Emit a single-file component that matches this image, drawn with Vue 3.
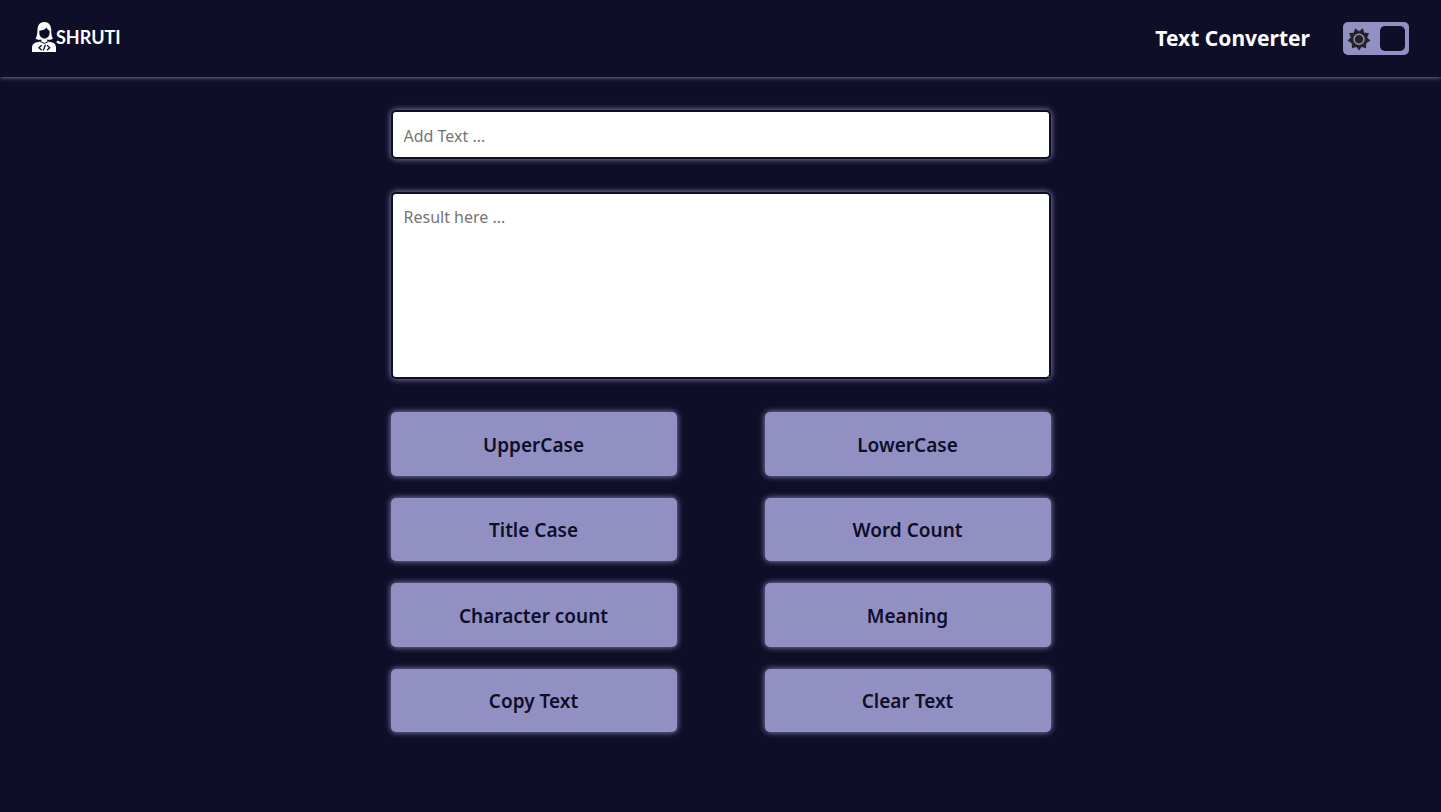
<script setup>
import { ref } from 'vue'

const source = ref('')
const result = ref('')
const dark = ref(true)

const countWords = (text) => text.split(/\s+/).filter(Boolean).length
const titleCase = (text) =>
  text.toLowerCase().replace(/(^|\s)\S/g, (letter) => letter.toUpperCase())

const actions = [
  { label: 'UpperCase', run: () => (result.value = source.value.toUpperCase()) },
  { label: 'LowerCase', run: () => (result.value = source.value.toLowerCase()) },
  { label: 'Title Case', run: () => (result.value = titleCase(source.value)) },
  { label: 'Word Count', run: () => (result.value = String(countWords(source.value))) },
  { label: 'Character count', run: () => (result.value = String(source.value.length)) },
  { label: 'Meaning', run: () => (result.value = source.value) },
  { label: 'Copy Text', run: () => navigator.clipboard?.writeText(result.value) },
  { label: 'Clear Text', run: () => { source.value = ''; result.value = '' } }
]
</script>

<template>
  <div class="page">
    <header class="bar">
      <a class="logo" href="#">
        <svg class="avatar" viewBox="0 0 24 30" aria-hidden="true">
          <path fill="#fff" fill-rule="evenodd" d="M12.300 0C8 0 5.700 3 5.500 7.500C5.300 11.500 5.200 14 3.600 16.600C4.800 17.700 7 18.100 9.500 17.600V19.200L4 20.600C1 21.500 0 23.300 0 26V30H24V26C24 23.300 23 21.500 20.500 20.600L15.200 19.200V17.600C17.700 18.100 19.700 17.700 20.900 16.600C19.400 14 19.300 11.500 19.200 7.500C19 3 16.700 0 12.300 0ZM7.300 8.700C10.800 8.600 13.200 7.400 14.400 5.600C15.200 7.200 16.300 8.300 17.600 8.800V10.800C17.600 14.200 15.300 16.600 12.500 16.600C9.600 16.600 7.300 14.200 7.300 10.800Z" />
          <path fill="none" stroke="#0e0e28" stroke-width="1" d="M8.300 19.600L12.300 21.400L16.300 19.600" />
          <path fill="none" stroke="#0e0e28" stroke-width="1.300" d="M9.700 23.200L7 25.700L9.700 28.200M15 23.200L17.700 25.700L15 28.200M13.400 22.800L11.300 28.600" />
        </svg>
        <span class="brand">SHRUTI</span>
      </a>
      <h1 class="title">Text Converter</h1>
      <label class="switch">
        <input v-model="dark" type="checkbox" role="switch" aria-label="Dark mode" />
        <svg class="sun" viewBox="0 0 24 24" aria-hidden="true">
          <path fill="#252326" d="M12 4.200L15.900 1.200L17.200 5.800L22 6L20.200 10.600L23.400 13.400L19.300 16.300L19 21.200L14.600 20L12 23.500L9.400 20L5 21.200L4.700 16.300L.6 13.400L3.800 10.600L2 6L6.800 5.800L8.100 1.200Z" />
          <circle cx="12" cy="12.200" r="5" fill="#252326" stroke="#9290c3" stroke-width="1.400" />
        </svg>
        <span class="knob"></span>
      </label>
    </header>

    <main class="converter">
      <input v-model="source" class="field" type="text" placeholder="Add Text ..." aria-label="Text" />
      <textarea v-model="result" class="field result" placeholder="Result here ..." aria-label="Result"></textarea>
      <div class="actions">
        <button v-for="action in actions" :key="action.label" type="button" @click="action.run">
          {{ action.label }}
        </button>
      </div>
    </main>
  </div>
</template>

<style>
body {
  margin: 0;
  background: #0e0e28;
}
</style>

<style scoped>
.page {
  min-height: 100vh;
  background: #0e0e28;
  font-family: "Noto Sans", "Open Sans", sans-serif;
}

.bar {
  display: flex;
  align-items: center;
  box-sizing: border-box;
  height: 77px;
  padding: 0 32px;
  box-shadow: 0 0 5px #9290c3;
}

.logo {
  display: flex;
  align-items: center;
  margin-right: auto;
  padding-bottom: 4px;
  color: #fff;
  text-decoration: none;
}

.avatar {
  width: 24px;
  height: 30px;
}

.brand {
  font-family: Lato, sans-serif;
  font-size: 18px;
  font-weight: 700;
  line-height: 30px;
}

.title {
  margin: 0 33px 0 0;
  padding-bottom: 2px;
  color: #fff;
  font-size: 21px;
  font-weight: 700;
  line-height: 30px;
}

.switch {
  position: relative;
  display: flex;
  align-items: center;
  justify-content: space-between;
  box-sizing: border-box;
  width: 66px;
  height: 33px;
  padding: 0 4px;
  border-radius: 5px;
  background: #9290c3;
  cursor: pointer;
}

.switch input {
  position: absolute;
  inset: 0;
  width: 100%;
  height: 100%;
  margin: 0;
  opacity: 0;
  cursor: pointer;
}

.sun {
  width: 24px;
  height: 24px;
}

.knob {
  width: 25px;
  height: 25px;
  border-radius: 5px;
  background: #0e0e28;
}

.converter {
  display: flex;
  flex-direction: column;
  gap: 33px;
  box-sizing: border-box;
  max-width: 692px;
  margin: 0 auto;
  padding: 33px 16px;
}

.field {
  box-sizing: border-box;
  width: 100%;
  height: 49px;
  margin: 0;
  padding: 11px 11px 9px;
  border: 2px solid #0e0e28;
  border-radius: 5px;
  outline: none;
  background: #fff;
  box-shadow: 0 0 6px #9290c3;
  color: #0e0e28;
  font-family: inherit;
  font-size: 16px;
  line-height: 25px;
}

.field::placeholder {
  color: #757575;
}

.result {
  display: block;
  height: 187px;
  resize: both;
}

.result::-webkit-resizer {
  background: linear-gradient(135deg, transparent 50%, #777 50%) right bottom / 3px 3px no-repeat;
}

.actions {
  display: grid;
  grid-template-columns: 1fr 1fr;
  grid-auto-rows: 1fr;
  gap: 22px 88px;
  min-height: 320px;
}

.actions button {
  padding: 2px 16px 0;
  border: 0;
  border-radius: 5px;
  background: #9290c3;
  box-shadow: 0 0 6px #9290c3;
  color: #0e0e28;
  font-family: inherit;
  font-size: 19px;
  font-weight: 600;
  line-height: 24px;
  cursor: pointer;
}
</style>
